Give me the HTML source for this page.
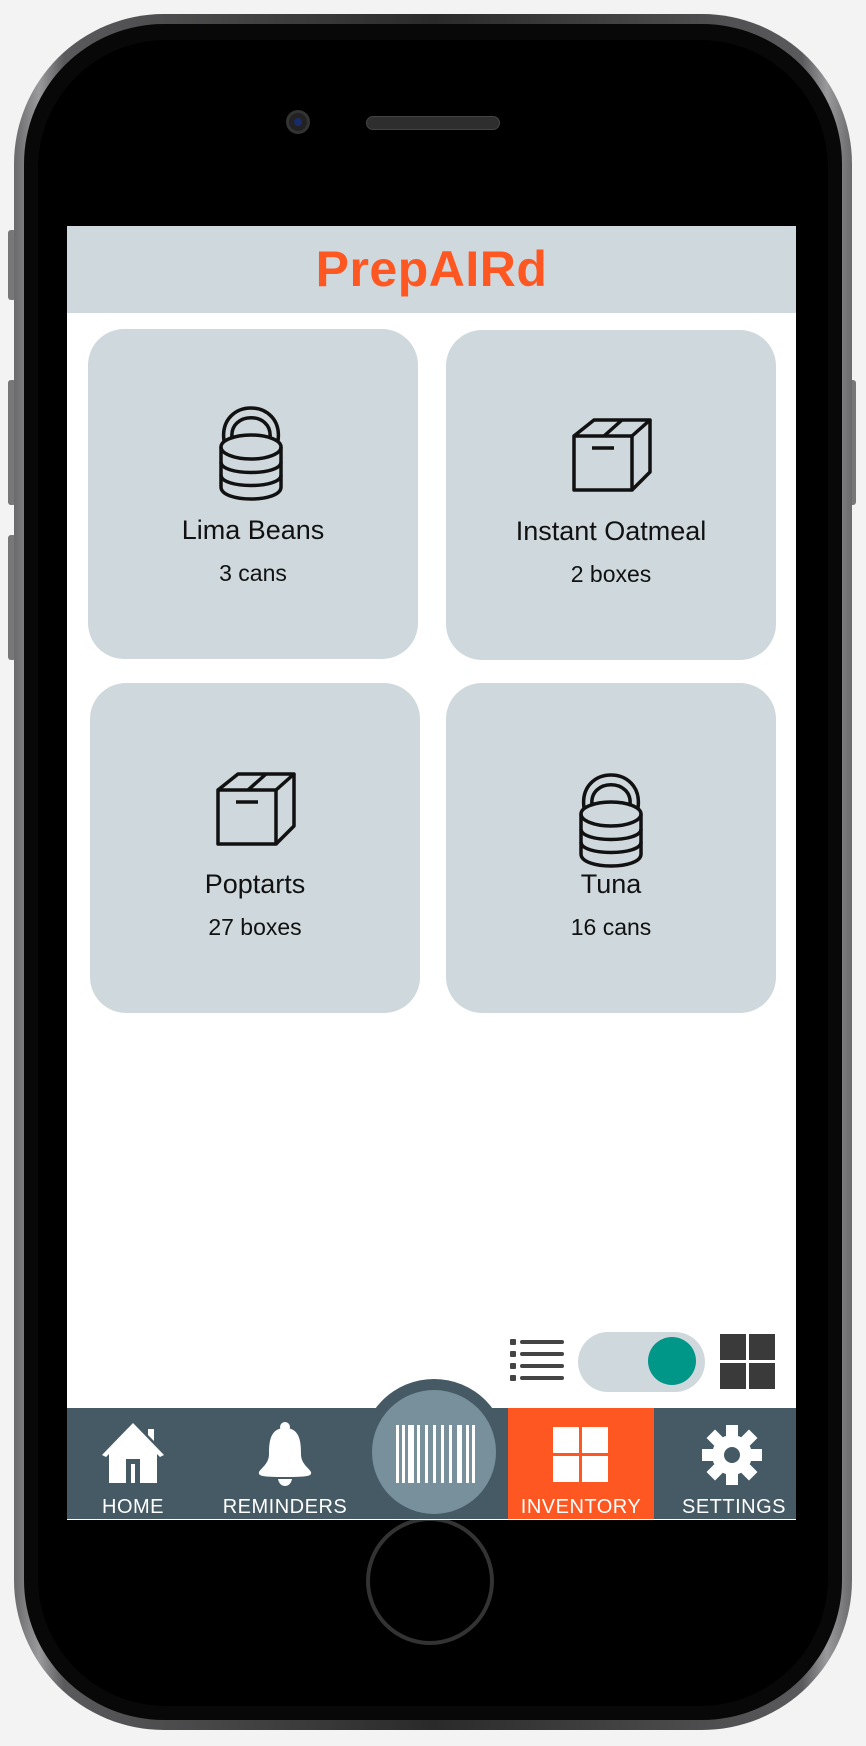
<!DOCTYPE html>
<html><head><meta charset="utf-8"><style>
*{margin:0;padding:0;box-sizing:border-box}
body{width:866px;height:1746px;background:#f3f3f3;position:relative;overflow:hidden;font-family:"Liberation Sans",sans-serif}
.abs{position:absolute}
.phone{left:14px;top:14px;width:838px;height:1716px;border-radius:150px;background:linear-gradient(90deg,#6a6a6c,#9a9a9c 3%,#5a5a5c 6%,#2a2a2a 50%,#5a5a5c 94%,#9a9a9c 97%,#6a6a6c)}
.bezel{left:24px;top:24px;width:818px;height:1696px;border-radius:140px;background:#080808}
.inner{left:38px;top:40px;width:790px;height:1666px;border-radius:128px;background:#000}
.screen{left:67px;top:226px;width:729px;height:1294px;background:#fff;overflow:hidden}
.hdr{left:0;top:0;width:729px;height:87px;background:#cfd8dc;text-align:center;color:#ff5722;font-weight:bold;font-size:50px;line-height:87px;letter-spacing:0.5px}
.card{background:#cfd8dc;border-radius:36px;width:330px;height:330px;text-align:center}
.card .n{position:absolute;left:0;width:100%;top:186px;font-size:27px;color:#111}
.card .c{position:absolute;left:0;width:100%;top:231px;font-size:23px;color:#111}
.card svg{position:absolute}
.nav{left:0;top:1182px;width:729px;height:111px;background:#455a64}
.lbl{position:absolute;top:88px;color:#fff;font-size:20px;text-align:center;width:160px;letter-spacing:0.5px}
</style></head><body>
<div class="abs" style="left:8px;top:230px;width:8px;height:70px;background:#777;border-radius:3px"></div>
<div class="abs" style="left:8px;top:380px;width:8px;height:125px;background:#777;border-radius:3px"></div>
<div class="abs" style="left:8px;top:535px;width:8px;height:125px;background:#777;border-radius:3px"></div>
<div class="abs" style="left:848px;top:380px;width:8px;height:125px;background:#777;border-radius:3px"></div>
<div class="abs phone"></div>
<div class="abs bezel"></div>
<div class="abs inner"></div>
<div class="abs" style="left:286px;top:110px;width:24px;height:24px;border-radius:50%;background:#222;border:3px solid #333"><div style="margin:5px;width:8px;height:8px;border-radius:50%;background:#1a2a6a"></div></div>
<div class="abs" style="left:366px;top:116px;width:134px;height:14px;border-radius:7px;background:#2e2e2e;border:1px solid #444"></div>
<div class="abs" style="left:366px;top:1517px;width:128px;height:128px;border-radius:50%;border:4px solid #333;background:#000"></div>
<div class="abs screen">
 <div class="abs hdr">PrepAIRd</div>
 <div class="abs card" style="left:21px;top:103px">
  <svg style="left:129px;top:76px" width="68" height="98" viewBox="0 0 68 98" fill="none" stroke="#111" stroke-width="3.5">
   <path d="M7 36 C1 -8 67 -8 61 36"/><path d="M15 33 C12 6 56 6 53 33"/>
   <ellipse cx="34" cy="42" rx="30" ry="12"/>
   <path d="M4 42 V82 C4 98 64 98 64 82 V42"/>
   <path d="M4 57 C4 71 64 71 64 57"/><path d="M4 70 C4 84 64 84 64 70"/>
  </svg>
  <div class="n">Lima Beans</div><div class="c">3 cans</div></div>
 <div class="abs card" style="left:379px;top:104px">
  <svg style="left:126px;top:88px" width="80" height="76" viewBox="0 0 80 76" fill="none" stroke="#111" stroke-width="3.5" stroke-linejoin="round">
   <rect x="2" y="18" width="58" height="54"/><path d="M2 18 L22 2 H78 L60 18"/><path d="M78 2 V54 L60 72"/><path d="M50 2 L32 18"/><path d="M20 30 H42"/>
  </svg>
  <div class="n">Instant Oatmeal</div><div class="c">2 boxes</div></div>
 <div class="abs card" style="left:23px;top:457px">
  <svg style="left:126px;top:89px" width="80" height="76" viewBox="0 0 80 76" fill="none" stroke="#111" stroke-width="3.5" stroke-linejoin="round">
   <rect x="2" y="18" width="58" height="54"/><path d="M2 18 L22 2 H78 L60 18"/><path d="M78 2 V54 L60 72"/><path d="M50 2 L32 18"/><path d="M20 30 H42"/>
  </svg>
  <div class="n">Poptarts</div><div class="c">27 boxes</div></div>
 <div class="abs card" style="left:379px;top:457px">
  <svg style="left:131px;top:89px" width="68" height="98" viewBox="0 0 68 98" fill="none" stroke="#111" stroke-width="3.5">
   <path d="M7 36 C1 -8 67 -8 61 36"/><path d="M15 33 C12 6 56 6 53 33"/>
   <ellipse cx="34" cy="42" rx="30" ry="12"/>
   <path d="M4 42 V82 C4 98 64 98 64 82 V42"/>
   <path d="M4 57 C4 71 64 71 64 57"/><path d="M4 70 C4 84 64 84 64 70"/>
  </svg>
  <div class="n">Tuna</div><div class="c">16 cans</div></div>
 <svg class="abs" style="left:443px;top:1113px" width="56" height="46" viewBox="0 0 56 46" fill="#444">
  <rect x="0" y="0" width="6" height="6" rx="1"/><rect x="10" y="1" width="44" height="4" rx="2"/>
  <rect x="0" y="12" width="6" height="6" rx="1"/><rect x="10" y="13" width="44" height="4" rx="2"/>
  <rect x="0" y="24" width="6" height="6" rx="1"/><rect x="10" y="25" width="44" height="4" rx="2"/>
  <rect x="0" y="36" width="6" height="6" rx="1"/><rect x="10" y="37" width="44" height="4" rx="2"/>
 </svg>
 <div class="abs" style="left:511px;top:1106px;width:127px;height:60px;border-radius:30px;background:#cfd8dc"></div>
 <div class="abs" style="left:581px;top:1111px;width:48px;height:48px;border-radius:50%;background:#009688"></div>
 <svg class="abs" style="left:653px;top:1108px" width="56" height="56" viewBox="0 0 56 56" fill="#3a3a3a"><rect x="0" y="0" width="26" height="26"/><rect x="29" y="0" width="26" height="26"/><rect x="0" y="29" width="26" height="26"/><rect x="29" y="29" width="26" height="26"/></svg>
 <div class="abs nav">
  <div class="abs" style="left:441px;top:0;width:146px;height:111px;background:#ff5722"></div>
  <svg class="abs" style="left:35px;top:15px" width="62" height="60" viewBox="0 0 62 60" fill="#fff"><path d="M31 0 L62 32 L58 34 L55 31 V60 H38 V36 H24 V60 H7 V31 L4 34 L0 32 Z M46 6 H52 V18 L46 12 Z"/><rect x="27" y="39" width="8" height="21" fill="#455a64"/><rect x="29" y="41" width="4" height="19" fill="#fff"/></svg>
  <svg class="abs" style="left:191px;top:14px" width="54" height="64" viewBox="0 0 54 64" fill="#fff"><circle cx="27" cy="5" r="5"/><path d="M27 6 C12 6 11 20 11 32 C11 42 3 46 1 50 C0 54 4 55 27 55 C50 55 54 54 53 50 C51 46 43 42 43 32 C43 20 42 6 27 6 Z"/><path d="M20 57 H34 C33 62 30 64 27 64 C24 64 21 62 20 57 Z"/></svg>
  <div class="abs" style="left:294px;top:-29px;width:146px;height:146px;border-radius:50%;background:#455a64"></div>
  <div class="abs" style="left:305px;top:-18px;width:124px;height:124px;border-radius:50%;background:#78909c"></div>
  <svg class="abs" style="left:329px;top:17px" width="80" height="58" viewBox="0 0 80 58" fill="#fff"><rect x="0" y="0" width="3" height="58"/><rect x="6" y="0" width="3" height="58"/><rect x="12" y="0" width="6" height="58"/><rect x="21" y="0" width="3" height="58"/><rect x="29" y="0" width="3" height="58"/><rect x="37" y="0" width="3" height="58"/><rect x="45" y="0" width="3" height="58"/><rect x="53" y="0" width="3" height="58"/><rect x="61" y="0" width="5" height="58"/><rect x="70" y="0" width="3" height="58"/><rect x="76" y="0" width="3" height="58"/></svg>
  <svg class="abs" style="left:486px;top:19px" width="56" height="56" viewBox="0 0 56 56" fill="#fff"><rect x="0" y="0" width="26" height="26"/><rect x="29" y="0" width="26" height="26"/><rect x="0" y="29" width="26" height="26"/><rect x="29" y="29" width="26" height="26"/></svg>
  <svg class="abs" style="left:635px;top:17px" width="60" height="60" viewBox="-30 -30 60 60"><g fill="#fff"><circle r="20"/><rect x="-6" y="-30" width="12" height="60"/><rect x="-6" y="-30" width="12" height="60" transform="rotate(45)"/><rect x="-6" y="-30" width="12" height="60" transform="rotate(90)"/><rect x="-6" y="-30" width="12" height="60" transform="rotate(135)"/></g><circle r="8" fill="#455a64"/></svg>
  <div class="lbl" style="left:-14px">HOME</div>
  <div class="lbl" style="left:138px">REMINDERS</div>
  <div class="lbl" style="left:434px">INVENTORY</div>
  <div class="lbl" style="left:587px">SETTINGS</div>
 </div>
 <div class="abs" style="left:0;top:1293px;width:729px;height:2px;background:#fff"></div>
</div>
</body></html>
